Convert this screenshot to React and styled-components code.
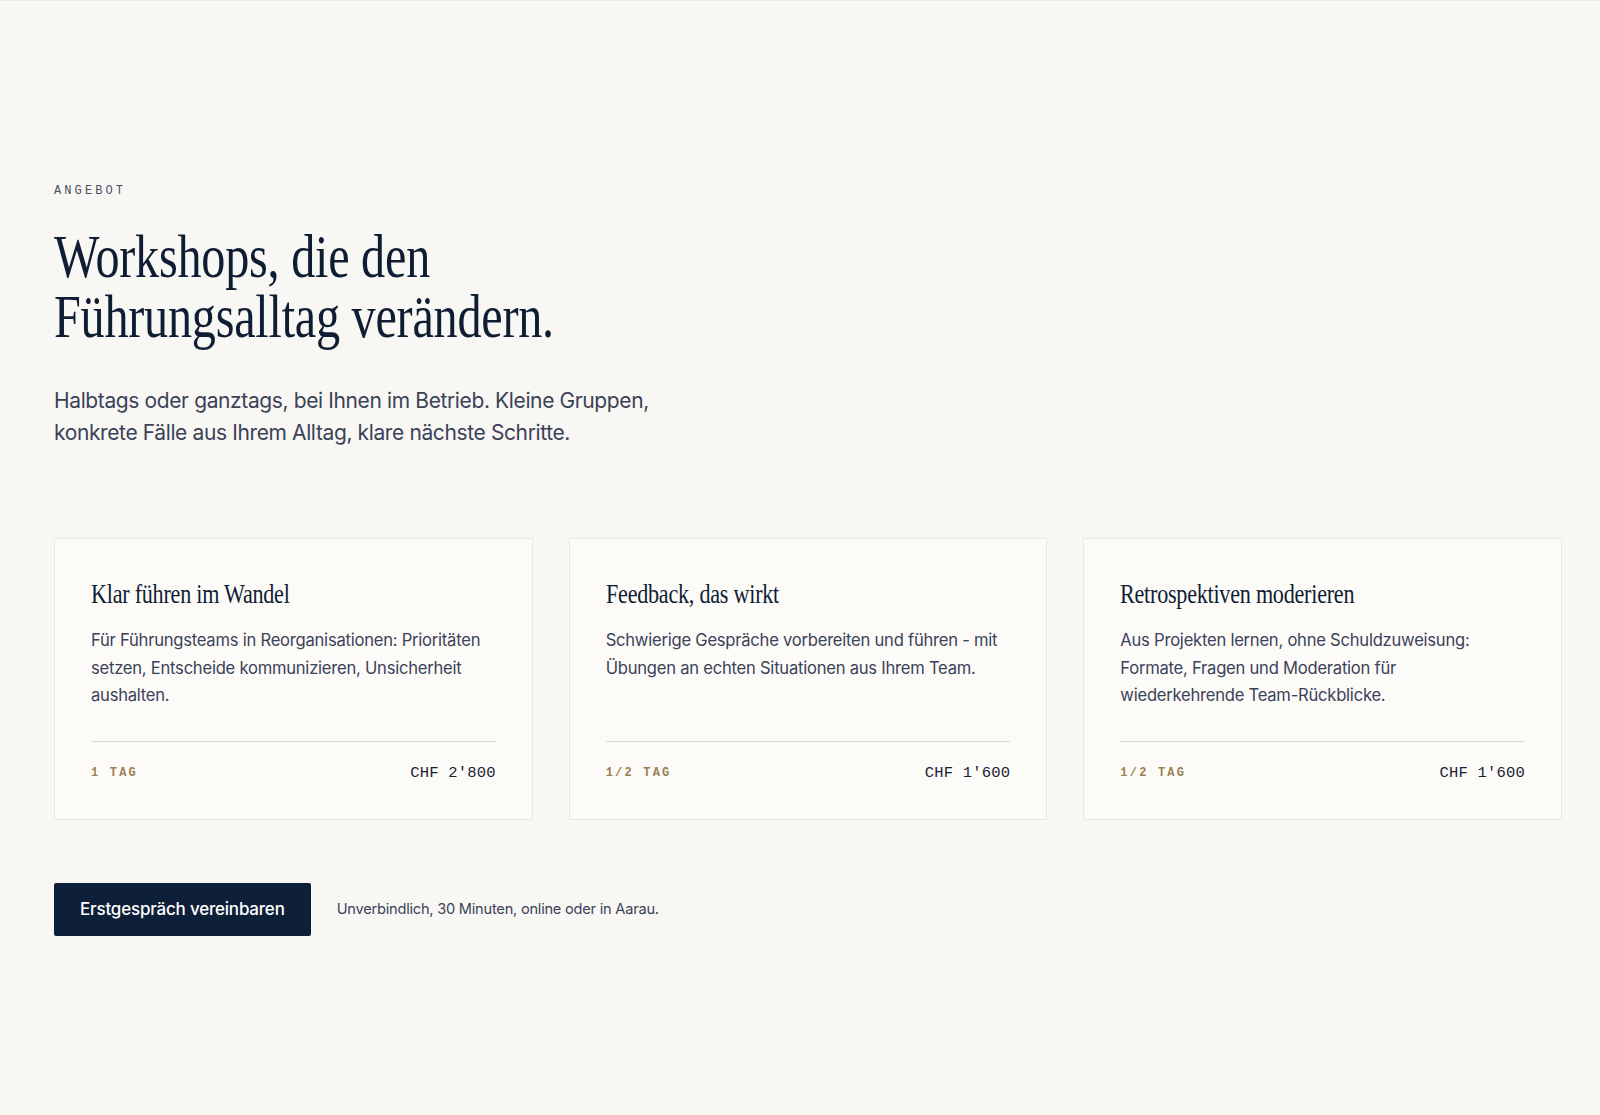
import React from 'react';
import styled, { createGlobalStyle } from 'styled-components';

const GlobalStyle = createGlobalStyle`
  * {
    box-sizing: border-box;
  }

  body {
    margin: 0;
    background: #f8f7f3;
    border-top: 1px solid #eeece7;
    font-family: Inter, "Noto Sans", sans-serif;
    color: #0f1d33;
  }
`;

const serif = `"Liberation Serif", "DejaVu Serif", serif`;
const mono = `"Liberation Mono", "DejaVu Sans Mono", monospace`;

const Section = styled.section`
  padding: 182px 0 120px 54px;
`;

const Eyebrow = styled.div`
  font-family: ${mono};
  font-size: 12px;
  line-height: 16px;
  letter-spacing: 3.1px;
  color: #4a5061;
`;

// the display serif is a condensed cut, so squeeze the regular one horizontally
const Headline = styled.h2`
  margin: 28px 0 0;
  font-family: ${serif};
  font-weight: 400;
  font-size: 61px;
  line-height: 60px;
  letter-spacing: -0.3px;
  color: #0f1d33;
  transform: scaleX(0.79);
  transform-origin: left top;
  white-space: nowrap;
`;

const Lead = styled.p`
  margin: 38px 0 0;
  max-width: 620px;
  font-size: 21px;
  line-height: 32px;
  letter-spacing: -0.38px;
  color: #3b4258;
`;

const CardGrid = styled.div`
  display: grid;
  grid-template-columns: repeat(3, 1fr);
  gap: 36px;
  width: 1508px;
  margin-top: 89px;
`;

const Card = styled.article`
  display: flex;
  flex-direction: column;
  padding: 38px 36px 36px;
  background: #fcfbf8;
  border: 1px solid #e9e7e1;
`;

const CardTitle = styled.h3`
  margin: 0;
  font-family: ${serif};
  font-weight: 400;
  font-size: 28px;
  line-height: 34px;
  letter-spacing: -0.3px;
  color: #0f1d33;
  transform: scaleX(0.79);
  transform-origin: left top;
  white-space: nowrap;
`;

const CardText = styled.p`
  margin: 16px 0 31px;
  max-width: 398px;
  font-size: 16.6px;
  line-height: 27.5px;
  letter-spacing: -0.24px;
  color: #3b4258;
`;

const CardFooter = styled.div`
  display: flex;
  align-items: center;
  justify-content: space-between;
  margin-top: auto;
  padding-top: 21px;
  border-top: 1px solid #dcd9d1;
`;

const Duration = styled.span`
  font-family: ${mono};
  font-size: 12px;
  line-height: 20px;
  letter-spacing: 2.2px;
  font-weight: 700;
  color: #9a8152;
`;

const Price = styled.span`
  font-family: ${mono};
  font-size: 15.5px;
  line-height: 20px;
  letter-spacing: 0.2px;
  color: #1a2236;
`;

const Actions = styled.div`
  display: flex;
  align-items: center;
  gap: 26px;
  margin-top: 63px;
`;

const PrimaryButton = styled.button`
  height: 53px;
  padding: 0 26px;
  border: 0;
  border-radius: 2px;
  background: #0e1f3a;
  color: #ffffff;
  font-family: Inter, "Noto Sans", sans-serif;
  font-size: 17px;
  font-weight: 500;
  letter-spacing: -0.2px;
  cursor: pointer;
`;

const Note = styled.span`
  font-size: 14.6px;
  letter-spacing: -0.22px;
  color: #3b4258;
`;

const workshops = [
  {
    title: 'Klar führen im Wandel',
    text: 'Für Führungsteams in Reorganisationen: Prioritäten setzen, Entscheide kommunizieren, Unsicherheit aushalten.',
    duration: '1 TAG',
    price: "CHF 2'800",
  },
  {
    title: 'Feedback, das wirkt',
    text: 'Schwierige Gespräche vorbereiten und führen - mit Übungen an echten Situationen aus Ihrem Team.',
    duration: '1/2 TAG',
    price: "CHF 1'600",
  },
  {
    title: 'Retrospektiven moderieren',
    text: 'Aus Projekten lernen, ohne Schuldzuweisung: Formate, Fragen und Moderation für wiederkehrende Team-Rückblicke.',
    duration: '1/2 TAG',
    price: "CHF 1'600",
  },
];

const App = () => {
  return (
    <>
      <GlobalStyle />
      <Section>
        <Eyebrow>ANGEBOT</Eyebrow>
        <Headline>
          Workshops, die den
          <br />
          Führungsalltag verändern.
        </Headline>
        <Lead>
          Halbtags oder ganztags, bei Ihnen im Betrieb. Kleine Gruppen, konkrete Fälle aus
          Ihrem Alltag, klare nächste Schritte.
        </Lead>

        <CardGrid>
          {workshops.map(w => (
            <Card key={w.title}>
              <CardTitle>{w.title}</CardTitle>
              <CardText>{w.text}</CardText>
              <CardFooter>
                <Duration>{w.duration}</Duration>
                <Price>{w.price}</Price>
              </CardFooter>
            </Card>
          ))}
        </CardGrid>

        <Actions>
          <PrimaryButton>Erstgespräch vereinbaren</PrimaryButton>
          <Note>Unverbindlich, 30 Minuten, online oder in Aarau.</Note>
        </Actions>
      </Section>
    </>
  );
};

export default App;
